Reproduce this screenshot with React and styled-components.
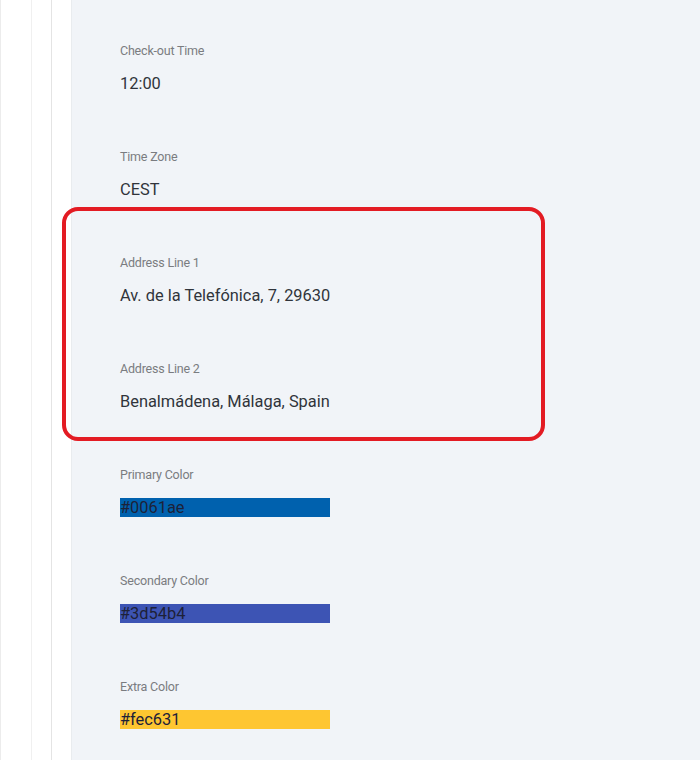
import React from "react";
import styled, { createGlobalStyle } from "styled-components";

const Global = createGlobalStyle`
  html, body { margin: 0; padding: 0; background: #ffffff; }
  body { font-family: Roboto, "Liberation Sans", Arial, sans-serif; }
`;

const Page = styled.div`
  position: relative;
  display: flex;
  width: 700px;
  min-height: 760px;
  overflow: hidden;
`;

const Rail = styled.div`
  width: ${(p) => p.$w}px;
  flex: 0 0 auto;
  background: #ffffff;
  border-left: 1px solid ${(p) => p.$line};
  box-sizing: border-box;
`;

const Panel = styled.main`
  flex: 1;
  background: #f1f4f8;
  border-left: 1px solid #e9ecef;
  padding: 44px 0 0 48px;
  display: flex;
  flex-direction: column;
  gap: 56px;
`;

const Field = styled.div`
  display: flex;
  flex-direction: column;
  gap: 16px;
`;

const Label = styled.div`
  font-size: 12.5px;
  line-height: 14px;
  color: #7a7c80;
  letter-spacing: -0.2px;
`;

const Value = styled.div`
  font-size: 16.4px;
  line-height: 20px;
  color: #30343b;
`;

const Swatch = styled.div`
  width: 210px;
  height: 19px;
  margin-bottom: 1px;
  font-size: 16.4px;
  line-height: 19px;
  color: #1d2138;
  background: ${(p) => p.$c};
`;

const Highlight = styled.div`
  position: absolute;
  left: 62px;
  top: 207px;
  width: 483px;
  height: 234px;
  box-sizing: border-box;
  border: 4px solid #e31b23;
  border-radius: 16px;
  pointer-events: none;
`;

const fields = [
  { label: "Check-out Time", value: "12:00" },
  { label: "Time Zone", value: "CEST" },
  { label: "Address Line 1", value: "Av. de la Telefónica, 7, 29630" },
  { label: "Address Line 2", value: "Benalmádena, Málaga, Spain" },
  { label: "Primary Color", color: "#0061ae" },
  { label: "Secondary Color", color: "#3d54b4" },
  { label: "Extra Color", color: "#fec631" },
];

export default function App() {
  return (
    <>
      <Global />
      <Page>
        <Rail $w={31} $line="#ececec" />
        <Rail $w={20} $line="#f0f0f0" />
        <Rail $w={20} $line="#e4e4e4" />
        <Panel>
          {fields.map((f) => (
            <Field key={f.label}>
              <Label>{f.label}</Label>
              {f.color ? (
                <Swatch $c={f.color}>{f.color}</Swatch>
              ) : (
                <Value>{f.value}</Value>
              )}
            </Field>
          ))}
        </Panel>
        <Highlight />
      </Page>
    </>
  );
}
